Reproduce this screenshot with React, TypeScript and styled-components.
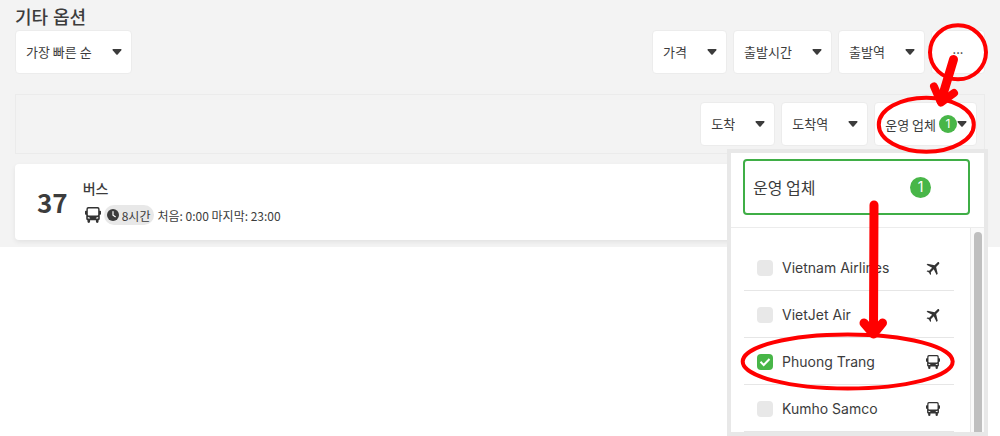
import React from "react";
import styled, { createGlobalStyle, css } from "styled-components";
import { MdFlight } from "react-icons/md";

const GlobalStyle = createGlobalStyle`
  *, *::before, *::after { box-sizing: border-box; }
  body {
    margin: 0;
    background: #fff;
    color: #3c3c3c;
    font-family: Inter, "Noto Sans CJK KR", sans-serif;
    font-size: 13px;
  }
  button, select, input { font: inherit; color: inherit; margin: 0; }
`;

const Page = styled.main`
  position: relative;
  min-height: 100vh;
`;

const Results = styled.section`
  background: #f3f3f3;
  padding: 5px 15px 7px;
`;

const Title = styled.h1`
  margin: 0;
  font-size: 18px;
  line-height: 25px;
  font-weight: 500;
`;

const Toolbar = styled.div`
  display: flex;
  justify-content: space-between;
  margin-bottom: 20px;
`;

const FilterGroup = styled.div`
  display: flex;
  gap: 6px;
`;

const MoreFilters = styled.div`
  display: flex;
  justify-content: flex-end;
  gap: 6px;
  padding: 7px;
  border: 1px solid #ebebeb;
  margin-bottom: 10px;
`;

const control = css`
  height: 44px;
  border: 1px solid #ececec;
  border-radius: 4px;
  background: #fff;
  font-size: 13px;
  font-family: "Noto Sans CJK KR", sans-serif;
  font-weight: 400;
`;

const SelectWrap = styled.label`
  display: grid;
  align-items: center;

  & > * { grid-area: 1 / 1; }
  & > svg { justify-self: end; margin-right: 10px; pointer-events: none; }
`;

const Select = styled.select`
  ${control}
  appearance: none;
  padding: 0 39px 2px 10px;
`;

const MoreButton = styled.button`
  ${control}
  width: 54px;
  padding: 0 0 8px;
`;

const OperatorFilter = styled.div`
  position: relative;
`;

const OperatorButton = styled.button`
  ${control}
  display: flex;
  align-items: center;
  padding: 0 9px 0 10px;
  white-space: nowrap;
`;

const Badge = styled.span<{ $size: number }>`
  display: inline-flex;
  align-items: center;
  justify-content: center;
  width: ${(p) => p.$size}px;
  height: ${(p) => p.$size}px;
  border-radius: 50%;
  background: #48b648;
  color: #fff;
  font-family: Inter, sans-serif;
  font-size: ${(p) => (p.$size > 20 ? 14 : 12)}px;
  line-height: 1;
`;

const ButtonBadge = styled(Badge)`
  margin-left: 3px;
`;

const Panel = styled.div`
  position: absolute;
  z-index: 1;
  top: 47px;
  right: -11px;
  width: 261px;
  border: 4px solid #e8e8e8;
  background: #fff;
`;

const PanelHeader = styled.div`
  padding: 6px 14px 12px 12px;
  border-bottom: 1px solid #ececec;
`;

const PanelTitle = styled.button`
  display: flex;
  align-items: center;
  justify-content: space-between;
  width: 100%;
  height: 56px;
  padding: 0 37px 0 8px;
  border: 2px solid #3fae46;
  border-radius: 4px;
  background: #fff;
  font-family: "Noto Sans CJK KR", sans-serif;
  font-size: 16px;
`;

const PanelBody = styled.div`
  display: flex;
`;

const OperatorList = styled.ul`
  flex: 1;
  margin: 0;
  padding: 16px 16px 0 13px;
  list-style: none;
`;

const OperatorRow = styled.li`
  border-bottom: 1px solid #e6e6e6;
`;

const OperatorLabel = styled.label`
  display: flex;
  align-items: center;
  gap: 9px;
  height: 46px;
  padding: 1px 14px 0 13px;
  font-size: 14px;
  white-space: nowrap;
`;

const KindIcon = styled.span`
  display: grid;
  place-items: center;
  width: 16px;
  margin-left: auto;
  margin-right: -1px;
  color: #333;
`;

const Plane = styled(MdFlight)`
  transform: rotate(45deg);
`;

const CheckWrap = styled.span`
  display: grid;
  place-items: center;

  & > * { grid-area: 1 / 1; }
  & > svg { pointer-events: none; }
`;

const Checkbox = styled.input`
  appearance: none;
  width: 16px;
  height: 16px;
  border-radius: 4px;
  background: #e8e8e8;

  &:checked { background: #48b648; }
`;

const ScrollTrack = styled.div`
  width: 14px;
  padding: 4px 2px 0 3px;
  border-left: 1px solid #e8e8e8;
  background: #fafafa;
`;

const ScrollThumb = styled.div`
  height: 100%;
  border-radius: 4px 4px 0 0;
  background: #bfbfbf;
`;

const Card = styled.article`
  display: flex;
  align-items: center;
  gap: 15px;
  height: 76px;
  padding: 0 22px;
  border-radius: 4px;
  background: #fff;
  box-shadow: 0 2px 5px rgba(0, 0, 0, 0.07);
`;

const Count = styled.strong`
  font-family: "Noto Sans CJK KR", sans-serif;
  font-size: 26px;
  font-weight: 700;
  line-height: 36px;
`;

const CardTitle = styled.h2`
  margin: 0 0 6px;
  font-size: 14px;
  line-height: 20px;
  font-weight: 500;
`;

const Meta = styled.div`
  display: flex;
  align-items: center;
  gap: 3px;
  padding-left: 2px;
  font-family: "Noto Sans CJK KR", sans-serif;
  font-size: 12px;
`;

const Duration = styled.span`
  display: inline-flex;
  align-items: center;
  gap: 3px;
  height: 20px;
  padding: 0 4px 0 3px;
  border-radius: 10px;
  background: #e8e8e8;
`;

const Annotations = styled.svg`
  position: absolute;
  z-index: 2;
  top: 0;
  right: 0;
  pointer-events: none;
`;

const Caret = () => (
  <svg width="10" height="6" viewBox="0 0 10 6" aria-hidden="true">
    <path d="M1.2 0H8.8Q10 .2 9.3 1.2L5.9 5.2Q5 6.200 4.100 5.200L.7 1.200Q0 .2 1.200 0Z" fill="#3c3c3c" />
  </svg>
);

const Bus = ({ size }: { size: number }) => (
  <svg width={size} height={size} viewBox="0 0 17 17" aria-hidden="true">
    <path
      fillRule="evenodd"
      fill="#333"
      d="M3.500 0H13.500Q15.500 0 15.500 2V4H16.200Q17 4 17 4.800V7.500Q17 8.300 16.200 8.300H15.700V12.500Q15.700 14 14.400 14V15.500Q14.400 17 13 17Q11.600 17 11.600 15.500V14H5.400V15.500Q5.400 17 4 17Q2.600 17 2.600 15.500V14Q1.300 14 1.300 12.500V8.300H.8Q0 8.300 0 7.500V4.800Q0 4 .8 4H1.500V2Q1.500 0 3.500 0ZM3.900 1.500Q3 1.500 3 2.400V8.100Q3 9 3.900 9H13.100Q14 9 14 8.100V2.400Q14 1.500 13.100 1.500ZM3 10.500V12.200H5.600Q5.300 10.800 3 10.500ZM14 10.500Q11.700 10.800 11.400 12.200H14Z"
    />
  </svg>
);

const Clock = () => (
  <svg width="12" height="12" viewBox="0 0 12 12" aria-hidden="true">
    <circle cx="6" cy="6" r="6" fill="#3c3c3c" />
    <path d="M6 2.500V6.200L8.300 7.700" fill="none" stroke="#fff" strokeWidth="1.200" strokeLinecap="round" />
  </svg>
);

const Check = () => (
  <svg width="12" height="10" viewBox="0 0 12 10" aria-hidden="true">
    <path d="M1.500 4.800L4.700 8L10.500 2" fill="none" stroke="#fff" strokeWidth="2" />
  </svg>
);

const FilterSelect = ({ label }: { label: string }) => (
  <SelectWrap>
    <Select aria-label={label}>
      <option>{label}</option>
    </Select>
    <Caret />
  </SelectWrap>
);

const operators = [
  { name: "Vietnam Airlines", kind: "plane", checked: false },
  { name: "VietJet Air", kind: "plane", checked: false },
  { name: "Phuong Trang", kind: "bus", checked: true },
  { name: "Kumho Samco", kind: "bus", checked: false },
];

const OperatorPanel = () => (
  <Panel>
    <PanelHeader>
      <PanelTitle type="button">
        운영 업체
        <Badge $size={21}>1</Badge>
      </PanelTitle>
    </PanelHeader>
    <PanelBody>
      <OperatorList>
        {operators.map((o) => (
          <OperatorRow key={o.name}>
            <OperatorLabel>
              <CheckWrap>
                <Checkbox type="checkbox" defaultChecked={o.checked} />
                {o.checked && <Check />}
              </CheckWrap>
              {o.name}
              <KindIcon>
                {o.kind === "plane" ? <Plane size={18} /> : <Bus size={14} />}
              </KindIcon>
            </OperatorLabel>
          </OperatorRow>
        ))}
      </OperatorList>
      <ScrollTrack>
        <ScrollThumb />
      </ScrollTrack>
    </PanelBody>
  </Panel>
);

export default function App() {
  return (
    <Page>
      <GlobalStyle />
      <Results>
        <Title>기타 옵션</Title>
        <Toolbar>
          <FilterSelect label="가장 빠른 순" />
          <FilterGroup>
            <FilterSelect label="가격" />
            <FilterSelect label="출발시간" />
            <FilterSelect label="출발역" />
            <MoreButton type="button">...</MoreButton>
          </FilterGroup>
        </Toolbar>
        <MoreFilters>
          <FilterSelect label="도착" />
          <FilterSelect label="도착역" />
          <OperatorFilter>
            <OperatorButton type="button" aria-expanded="true">
              운영 업체
              <ButtonBadge $size={18}>1</ButtonBadge>
              <Caret />
            </OperatorButton>
            <OperatorPanel />
          </OperatorFilter>
        </MoreFilters>
        <Card>
          <Count>37</Count>
          <div>
            <CardTitle>버스</CardTitle>
            <Meta>
              <Bus size={16} />
              <Duration>
                <Clock />
                8시간
              </Duration>
              <span>처음: 0:00 마지막: 23:00</span>
            </Meta>
          </div>
        </Card>
      </Results>
      <Annotations width="300" height="436" viewBox="700 0 300 436" aria-hidden="true">
        <g fill="none" stroke="#f00" strokeWidth="4">
          <ellipse cx="958" cy="52.300" rx="28" ry="27" />
          <ellipse cx="926.300" cy="124.700" rx="47.500" ry="27" />
          <ellipse cx="847.700" cy="361.500" rx="105" ry="27" />
        </g>
        <g fill="none" stroke="#f00" strokeLinecap="round" strokeLinejoin="round">
          <path d="M953.500 59.500L941 101" strokeWidth="9" />
          <path d="M934 86.500L941 102.500L954 93" strokeWidth="8" />
          <path d="M874 205L873.500 332" strokeWidth="9" />
          <path d="M864 323L873.500 334L882.500 323" strokeWidth="9" />
        </g>
      </Annotations>
    </Page>
  );
}
